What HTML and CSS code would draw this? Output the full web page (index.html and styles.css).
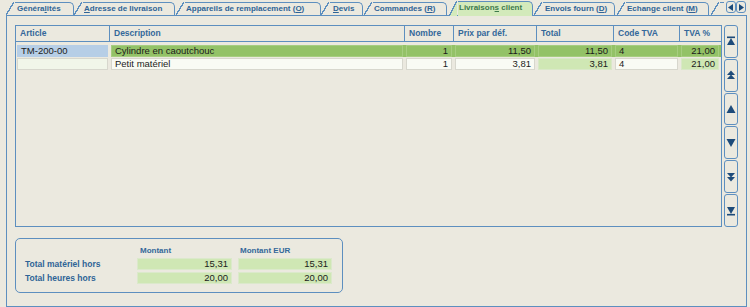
FILE: index.html
```html
<!DOCTYPE html>
<html lang="fr">
<head>
    <meta charset="UTF-8">
    <title>Livraisons client</title>
    <link rel="stylesheet" href="styles.css">
</head>
<body>
    <!-- Tabs -->
    <div class="tabbar">
        <div class="tab tab-gen">Généra<u>l</u>ités</div>
        <div class="tab tab-adr"><u>A</u>dresse de livraison</div>
        <div class="tab tab-app">Appareils de remplacement (<u>O</u>)</div>
        <div class="tab tab-dev"><u>D</u>evis</div>
        <div class="tab tab-cmd">Commandes (<u>R</u>)</div>
        <div class="tab tab-liv active">Livraison<u>s</u> client</div>
        <div class="tab tab-env">Envois fourn (<u>D</u>)</div>
        <div class="tab tab-ech">Echange client (<u>M</u>)</div>
        <div class="tab tab-more"></div>
        <div class="tab-scroll">
            <span class="scroll-btn"><svg width="6" height="7" viewBox="0 0 6 7"><polygon points="5,0 5,7 0,3.5" /></svg></span>
            <span class="scroll-btn"><svg width="6" height="7" viewBox="0 0 6 7"><polygon points="1,0 1,7 6,3.5" /></svg></span>
        </div>
    </div>

    <div class="panel">
        <div class="grid-area">
            <div class="grid">
                <div class="grid-head">
                    <div>Article</div>
                    <div>Description</div>
                    <div>Nombre</div>
                    <div>Prix par déf.</div>
                    <div>Total</div>
                    <div>Code TVA</div>
                    <div>TVA %</div>
                </div>
                <div class="grid-row selected">
                    <div class="cell key">TM-200-00</div>
                    <div class="cell">Cylindre en caoutchouc</div>
                    <div class="cell num">1</div>
                    <div class="cell num">11,50</div>
                    <div class="cell num">11,50</div>
                    <div class="cell">4</div>
                    <div class="cell num">21,00</div>
                </div>
                <div class="grid-row">
                    <div class="cell key"></div>
                    <div class="cell">Petit matériel</div>
                    <div class="cell num">1</div>
                    <div class="cell num">3,81</div>
                    <div class="cell num calc">3,81</div>
                    <div class="cell">4</div>
                    <div class="cell num calc">21,00</div>
                </div>
            </div>

            <!-- Record navigation -->
            <div class="nav">
                <div class="nav-btn"><svg width="10" height="10" viewBox="0 0 10 10"><rect x="1" y="0.5" width="8" height="1.6" /><polygon points="5,2 9,9 1,9" /></svg></div>
                <div class="nav-btn"><svg width="10" height="10" viewBox="0 0 10 10"><polygon points="5,0.5 9,5 1,5" /><polygon points="5,4.5 9,9 1,9" /></svg></div>
                <div class="nav-btn"><svg width="10" height="10" viewBox="0 0 10 10"><polygon points="5,1 9.5,9 0.5,9" /></svg></div>
                <div class="nav-btn"><svg width="10" height="10" viewBox="0 0 10 10"><polygon points="0.5,1 9.5,1 5,9" /></svg></div>
                <div class="nav-btn"><svg width="10" height="10" viewBox="0 0 10 10"><polygon points="1,1 9,1 5,5.5" /><polygon points="1,5 9,5 5,9.5" /></svg></div>
                <div class="nav-btn"><svg width="10" height="10" viewBox="0 0 10 10"><polygon points="1,1 9,1 5,8" /><rect x="1" y="7.9" width="8" height="1.6" /></svg></div>
            </div>
        </div>

        <!-- Totals -->
        <div class="totals">
            <div></div>
            <div class="totals-head">Montant</div>
            <div class="totals-head">Montant EUR</div>
            <div class="totals-label">Total matériel hors</div>
            <div class="totals-val">15,31</div>
            <div class="totals-val">15,31</div>
            <div class="totals-label">Total heures hors</div>
            <div class="totals-val">20,00</div>
            <div class="totals-val">20,00</div>
        </div>
    </div>
</body>
</html>
```

FILE: styles.css
```css
body, html {
    margin: 0;
    padding: 0;
    font-family: 'Liberation Sans', Arial, sans-serif;
    background-color: #ebe9df;
    color: #1b1b1b;
}

body {
    width: 750px;
    height: 307px;
    overflow: hidden;
}

/* ---- tabs ---- */
.tabbar {
    display: flex;
    align-items: flex-end;
    height: 15px;
}

.tab {
    position: relative;
    box-sizing: border-box;
    height: 13px;
    margin-left: 10px;
    padding-left: 1px;
    border-top: 1px solid #5d8fbf;
    border-right: 1px solid #5d8fbf;
    border-top-right-radius: 5px;
    font-size: 8px;
    font-weight: bold;
    line-height: 12px;
    color: #2f6496;
    white-space: nowrap;
}

.tab::before {
    content: '';
    position: absolute;
    left: -9px;
    top: -1px;
    width: 8px;
    height: 13px;
    background: linear-gradient(to bottom right, transparent calc(50% - 0.7px), #5d8fbf calc(50% - 0.7px), #5d8fbf calc(50% + 0.7px), transparent calc(50% + 0.7px));
}

.tab u {
    text-decoration-thickness: 1px;
}

.tab-gen { margin-left: 15px; width: 59px; padding-left: 2px; }
.tab-adr { margin-left: 9px; width: 92px; }
.tab-app { width: 136px; }
.tab-dev { margin-left: 9px; width: 33px; padding-left: 3px; }
.tab-cmd { width: 74px; }
.tab-liv { margin-left: 11px; width: 75px; }
.tab-env { width: 72px; padding-left: 2px; }
.tab-ech { margin-left: 11px; width: 83px; }
.tab-more { margin-left: 11px; width: 4px; border-right: none; border-top-right-radius: 0; }

.tab.active {
    z-index: 1;
    height: 15px;
    margin-bottom: -1px;
    background-color: #d3eabb;
    color: #3d7a4c;
}

.tab.active::before {
    height: 15px;
    background: linear-gradient(to bottom right, transparent calc(50% - 0.7px), #5d8fbf calc(50% - 0.7px), #5d8fbf calc(50% + 0.7px), #d3eabb calc(50% + 0.7px));
}

.tab-scroll {
    display: flex;
    margin-left: 2px;
    margin-bottom: 2px;
}

.scroll-btn {
    display: flex;
    align-items: center;
    justify-content: center;
    box-sizing: border-box;
    width: 10px;
    height: 12px;
    border: 1px solid #5d8fbf;
    border-radius: 3px;
    fill: #1d4b7a;
}

/* ---- main panel ---- */
.panel {
    box-sizing: border-box;
    height: 292px;
    margin: 0 3px 0 6px;
    padding: 9px 0 0 8px;
    border: 1px solid #5d8fbf;
}

.grid-area {
    display: flex;
    height: 202px;
}

.grid {
    box-sizing: border-box;
    width: 707px;
    border: 1px solid #5d8fbf;
}

.grid-head, .grid-row {
    display: grid;
    grid-template-columns: 94px 295px 49px 83px 77px 66px 41px;
}

.grid-head {
    height: 15px;
    border-bottom: 1px solid #5d8fbf;
}

.grid-head div {
    padding-left: 4px;
    border-right: 1px solid #5d8fbf;
    font-size: 8.5px;
    font-weight: bold;
    line-height: 15px;
    color: #34689a;
}

.grid-head div:last-child {
    border-right: none;
}

.grid-row {
    height: 12px;
    margin-bottom: 1px;
}

.grid-head + .grid-row {
    margin-top: 3px;
}

.cell {
    box-sizing: border-box;
    height: 12px;
    margin: 0 2px 0 1px;
    padding: 0 3px;
    border: 1px solid #d7d7cd;
    background-color: #f9fbf4;
    font-size: 9.5px;
    line-height: 10px;
    white-space: nowrap;
    overflow: hidden;
}

.cell.num {
    text-align: right;
}

.cell.key {
    background-color: #f1f6e9;
}

.cell.calc {
    background-color: #cfe7b4;
    border-color: #d9e8c8;
}

.grid-row.selected {
    background: linear-gradient(to right, transparent 96px, #93c267 96px);
}

.grid-row.selected .cell {
    background-color: #93c267;
    border-color: #a6cd80;
}

.grid-row.selected .cell.key {
    background-color: #b6cee6;
    border-color: #b6cee6;
}

.nav {
    display: flex;
    flex-direction: column;
    gap: 1px;
    width: 14px;
    margin-left: 2px;
}

.nav-btn {
    flex: 1;
    display: flex;
    align-items: center;
    justify-content: center;
    border: 1px solid #5d8fbf;
    border-radius: 3px;
    fill: #1d4b7a;
}

/* ---- totals ---- */
.totals {
    display: grid;
    grid-template-columns: 106px 95px 94px;
    grid-template-rows: 11px 12px 12px;
    column-gap: 6px;
    row-gap: 2px;
    box-sizing: border-box;
    width: 328px;
    height: 55px;
    margin-top: 11px;
    padding: 6px 0 0 9px;
    border: 1px solid #5d8fbf;
    border-radius: 5px;
}

.totals-head {
    padding-left: 3px;
    font-size: 8px;
    font-weight: bold;
    line-height: 11px;
    color: #34689a;
}

.totals-head:nth-child(3) {
    padding-left: 2px;
}

.totals-label {
    font-size: 8.5px;
    font-weight: bold;
    line-height: 12px;
    color: #2f6496;
    white-space: nowrap;
}

.totals-val {
    box-sizing: border-box;
    padding-right: 3px;
    border: 1px solid #dbe9cb;
    background-color: #cfe7b4;
    font-size: 9.5px;
    line-height: 10px;
    text-align: right;
}
```
